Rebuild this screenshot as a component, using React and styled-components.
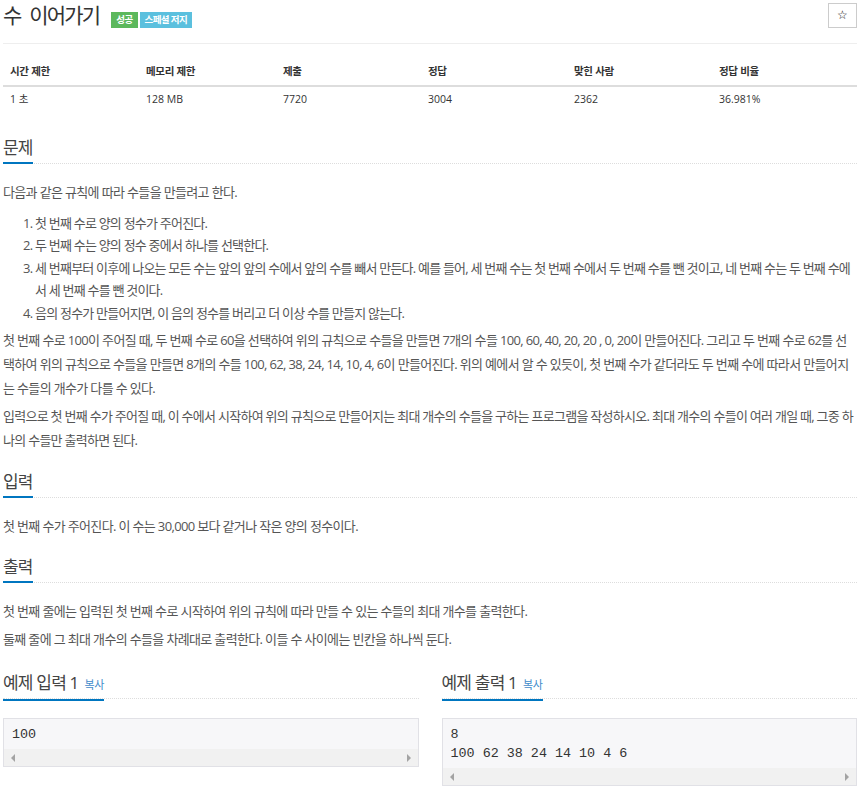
import React from 'react';
import styled, { createGlobalStyle } from 'styled-components';

const GlobalStyle = createGlobalStyle`
    body {
        margin: 0;
        background: #fff;
        font-family: "Open Sans", "Noto Sans CJK KR", sans-serif;
        color: #555;
    }
`;

const Page = styled.div`
    padding: 0 6px 0 3px;
`;

const Header = styled.div`
    height: 44px;
    box-sizing: border-box;
    border-bottom: 1px solid #eee;
    display: flex;
    justify-content: space-between;
    align-items: flex-start;
`;
const TitleRow = styled.div`
    display: flex;
    align-items: flex-start;
    gap: 2px;
`;
const Title = styled.h1`
    margin: 0 10px 0 0;
    font-size: 21px;
    font-weight: 400;
    line-height: 30px;
    letter-spacing: -1.8px;
    word-spacing: 5px;
    color: #333;
`;
const Label = styled.span`
    margin-top: 12px;
    height: 16px;
    padding: 0 5px;
    background: ${p => p.$color};
    color: #fff;
    font-size: 9.5px;
    font-weight: 700;
    line-height: 16px;
    letter-spacing: -0.6px;
`;
const StarButton = styled.button`
    margin-top: 3px;
    width: 29px;
    height: 25px;
    padding: 0;
    background: #fff;
    border: 1px solid #ccc;
    color: #111;
    font-size: 12px;
    font-family: "DejaVu Sans", sans-serif;
    line-height: 23px;
`;

const Table = styled.table`
    margin-top: 13px;
    width: 100%;
    table-layout: fixed;
    border-collapse: collapse;
    font-size: 10.5px;
    color: #333;
    th {
        text-align: left;
        font-weight: 700;
        padding: 7px;
        line-height: 14px;
        border-bottom: 2px solid #ddd;
        letter-spacing: -0.3px;
    }
    td {
        padding: 5px 7px;
        line-height: 14px;
    }
`;

const Section = styled.section`
    margin-top: ${p => p.$top || 17}px;
`;
const SectionHead = styled.div`
    border-bottom: 1px dotted #ddd;
    height: 29px;
    box-sizing: border-box;
`;
const HeadText = styled.h2`
    display: inline-block;
    margin: 0;
    font-size: 17px;
    font-weight: 400;
    line-height: 26px;
    letter-spacing: -0.8px;
    color: #444;
    padding-bottom: 1px;
    border-bottom: 2px solid #0076c0;
`;
const Copy = styled.span`
    margin-left: 6px;
    font-size: 11px;
    color: #428bca;
    letter-spacing: -0.3px;
`;

const Body = styled.div`
    margin-top: 16px;
    font-size: 13px;
`;
const Para = styled.p`
    margin: 0 0 4px;
    line-height: 24px;
    letter-spacing: ${p => p.$spacing || -0.65}px;
`;
const List = styled.ol`
    margin: 8px 0 4px;
    padding-left: 32px;
    letter-spacing: -0.78px;
    li {
        line-height: 22.4px;
    }
`;

const Samples = styled.div`
    display: grid;
    grid-template-columns: 1fr 1fr;
    column-gap: 23px;
    margin-top: 19px;
`;
const Pre = styled.div`
    margin-top: 19px;
    border: 1px solid #e1e1e6;
    background: #f7f7f9;
`;
const Code = styled.pre`
    margin: 0;
    padding: 6px 8px 5px;
    font-family: "Liberation Mono", monospace;
    font-size: 13.4px;
    line-height: 19px;
    color: #333;
`;
const ScrollBar = styled.div`
    height: 17px;
    background: #f1f1f1;
    display: flex;
    justify-content: space-between;
    align-items: center;
    padding: 0 7px;
`;
const Arrow = styled.span`
    width: 0;
    height: 0;
    border-top: 4px solid transparent;
    border-bottom: 4px solid transparent;
    ${p => p.$right ? 'border-left: 4px solid #a3a3a3;' : 'border-right: 4px solid #a3a3a3;'}
`;

const stats = [
    ['시간 제한', '1 초'],
    ['메모리 제한', '128 MB'],
    ['제출', '7720'],
    ['정답', '3004'],
    ['맞힌 사람', '2362'],
    ['정답 비율', '36.981%'],
];
const widths = [136, 137, 145, 146, 145];

function Sample({ title, lines }) {
    return (
        <div>
            <SectionHead>
                <HeadText>{title}<Copy>복사</Copy></HeadText>
            </SectionHead>
            <Pre>
                <Code>{lines.join('\n')}</Code>
                <ScrollBar>
                    <Arrow />
                    <Arrow $right />
                </ScrollBar>
            </Pre>
        </div>
    );
}

function App() {
  return (
    <Page>
        <GlobalStyle />
        <Header>
            <TitleRow>
                <Title>수 이어가기</Title>
                <Label $color="#5cb85c">성공</Label>
                <Label $color="#5bc0de">스페셜 저지</Label>
            </TitleRow>
            <StarButton>☆</StarButton>
        </Header>

        <Table>
            <colgroup>
                {widths.map((w, i) => <col key={i} style={{ width: w }} />)}
                <col />
            </colgroup>
            <thead>
                <tr>{stats.map(s => <th key={s[0]}>{s[0]}</th>)}</tr>
            </thead>
            <tbody>
                <tr>{stats.map(s => <td key={s[0]}>{s[1]}</td>)}</tr>
            </tbody>
        </Table>

        <Section $top={24}>
            <SectionHead><HeadText>문제</HeadText></SectionHead>
            <Body>
                <Para>다음과 같은 규칙에 따라 수들을 만들려고 한다.</Para>
                <List>
                    <li>첫 번째 수로 양의 정수가 주어진다.</li>
                    <li>두 번째 수는 양의 정수 중에서 하나를 선택한다.</li>
                    <li>세 번째부터 이후에 나오는 모든 수는 앞의 앞의 수에서 앞의 수를 빼서 만든다. 예를 들어, 세 번째 수는 첫 번째 수에서 두 번째 수를 뺀 것이고, 네 번째 수는 두 번째 수에서 세 번째 수를 뺀 것이다.</li>
                    <li>음의 정수가 만들어지면, 이 음의 정수를 버리고 더 이상 수를 만들지 않는다.</li>
                </List>
                <Para>첫 번째 수로 100이 주어질 때, 두 번째 수로 60을 선택하여 위의 규칙으로 수들을 만들면 7개의 수들 100, 60, 40, 20, 20 , 0, 20이 만들어진다. 그리고 두 번째 수로 62를 선택하여 위의 규칙으로 수들을 만들면 8개의 수들 100, 62, 38, 24, 14, 10, 4, 6이 만들어진다. 위의 예에서 알 수 있듯이, 첫 번째 수가 같더라도 두 번째 수에 따라서 만들어지는 수들의 개수가 다를 수 있다.</Para>
                <Para $spacing={-0.72}>입력으로 첫 번째 수가 주어질 때, 이 수에서 시작하여 위의 규칙으로 만들어지는 최대 개수의 수들을 구하는 프로그램을 작성하시오. 최대 개수의 수들이 여러 개일 때, 그중 하나의 수들만 출력하면 된다.</Para>
            </Body>
        </Section>

        <Section>
            <SectionHead><HeadText>입력</HeadText></SectionHead>
            <Body>
                <Para>첫 번째 수가 주어진다. 이 수는 30,000 보다 같거나 작은 양의 정수이다.</Para>
            </Body>
        </Section>

        <Section $top={16}>
            <SectionHead><HeadText>출력</HeadText></SectionHead>
            <Body>
                <Para>첫 번째 줄에는 입력된 첫 번째 수로 시작하여 위의 규칙에 따라 만들 수 있는 수들의 최대 개수를 출력한다.</Para>
                <Para>둘째 줄에 그 최대 개수의 수들을 차례대로 출력한다. 이들 수 사이에는 빈칸을 하나씩 둔다.</Para>
            </Body>
        </Section>

        <Samples>
            <Sample title="예제 입력 1" lines={['100']} />
            <Sample title="예제 출력 1" lines={['8', '100 62 38 24 14 10 4 6']} />
        </Samples>
    </Page>
  );
}

export default App;
